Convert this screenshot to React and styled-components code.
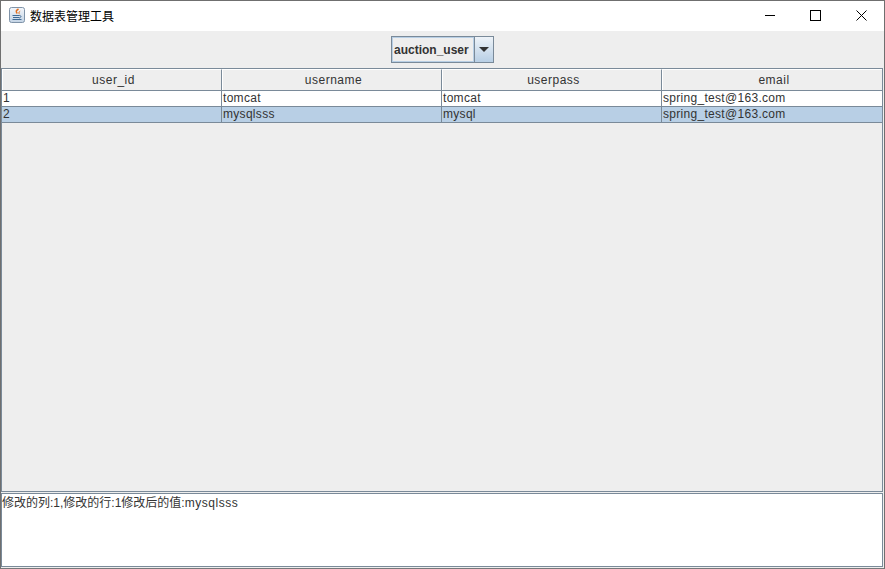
import React from "react";
import styled, { createGlobalStyle } from "styled-components";

const Global = createGlobalStyle`
  html, body { margin: 0; padding: 0; background: #eeeeee; }
  body { font-family: "Liberation Sans", "Noto Sans CJK SC", sans-serif; }
`;

const BORDER = "#7a8a99";
const columns = ["user_id", "username", "userpass", "email"];
const rows = [
  { values: ["1", "tomcat", "tomcat", "spring_test@163.com"] },
  { values: ["2", "mysqlsss", "mysql", "spring_test@163.com"], selected: true },
];

const JavaIcon = () => (
  <svg width="16" height="16" viewBox="0 0 16 16">
    <defs>
      <linearGradient id="plate" x1="0" y1="0" x2="0" y2="1">
        <stop offset="0" stopColor="#f4f7fb" />
        <stop offset="1" stopColor="#c3d3e4" />
      </linearGradient>
    </defs>
    <rect x="0.5" y="0.5" width="15" height="15" rx="2" fill="url(#plate)" stroke="#7f93a8" />
    <path d="M9.5 2c-2.5 1.5-3 2.5-1.2 4.6" fill="none" stroke="#e4701e" strokeWidth="1.5" />
    <path d="M11.2 4.2c-1.6 1-1.6 1.8-.7 3" fill="none" stroke="#e4701e" strokeWidth="1" />
    <path d="M3.5 8.5h7M4 10.5h6M3.5 12.5h9" stroke="#3f6a94" strokeWidth="1" />
    <path d="M10.5 8.5c2 0 2 2-.5 2.5" fill="none" stroke="#3f6a94" strokeWidth="1" />
  </svg>
);

const App = () => (
  <Window>
    <Global />
    <TitleBar>
      <IconSlot>
        <JavaIcon />
      </IconSlot>
      <Title>数据表管理工具</Title>
      <Controls>
        <ControlButton>
          <svg width="11" height="11" viewBox="0 0 11 11">
            <path d="M1 5.5h10" stroke="#000" />
          </svg>
        </ControlButton>
        <ControlButton>
          <svg width="11" height="11" viewBox="0 0 11 11">
            <rect x="0.5" y="0.5" width="10" height="10" fill="none" stroke="#000" />
          </svg>
        </ControlButton>
        <ControlButton>
          <svg width="11" height="11" viewBox="0 0 11 11">
            <path d="M0.5 0.5l10 10M10.5 0.5l-10 10" stroke="#000" />
          </svg>
        </ControlButton>
      </Controls>
    </TitleBar>
    <Toolbar>
      <Combo>
        <ComboValue>auction_user</ComboValue>
        <ComboArrow>
          <svg width="10" height="5" viewBox="0 0 10 5">
            <path d="M0 0h10L5 5z" fill="#333" />
          </svg>
        </ComboArrow>
      </Combo>
    </Toolbar>
    <TablePane>
      <HeaderRow>
        {columns.map((name) => (
          <HeaderCell key={name}>{name}</HeaderCell>
        ))}
      </HeaderRow>
      {rows.map((row) => (
        <Row key={row.values[0]} $selected={row.selected}>
          {row.values.map((value, i) => (
            <Cell key={i}>{value}</Cell>
          ))}
        </Row>
      ))}
    </TablePane>
    <LogPane>
      修改的列:1,修改的行:1修改后的值:<LogValue>mysqlsss</LogValue>
    </LogPane>
  </Window>
);

export default App;

const Window = styled.div`
  box-sizing: border-box;
  width: 885px;
  height: 569px;
  display: flex;
  flex-direction: column;
  padding: 0 1px 1px 0;
  border: 1px solid #6f6f6f;
  border-bottom-color: #77797b;
  background: #eeeeee;
  overflow: hidden;
  color: #333333;
  font-size: 12px;
`;

const TitleBar = styled.div`
  box-sizing: border-box;
  height: 30px;
  flex: none;
  margin-right: -1px;
  display: flex;
  align-items: flex-start;
  background: #ffffff;
`;

const IconSlot = styled.div`
  width: 16px;
  height: 16px;
  margin: 6px 5px 0 8px;
`;

const Title = styled.div`
  flex: 1;
  padding-top: 6px;
  color: #000000;
  font-size: 12px;
`;

const Controls = styled.div`
  display: flex;
  height: 100%;
`;

const ControlButton = styled.div`
  box-sizing: border-box;
  width: 46px;
  height: 100%;
  padding: 9px 0 0 18px;
`;

const Toolbar = styled.div`
  height: 37px;
  flex: none;
  display: flex;
  justify-content: center;
  padding-top: 5px;
  box-sizing: border-box;
`;

const Combo = styled.div`
  box-sizing: border-box;
  width: 103px;
  height: 27px;
  display: flex;
  border: 1px solid ${BORDER};
  background: #eeeeee;
`;

const ComboValue = styled.div`
  flex: 1;
  display: flex;
  align-items: center;
  padding-left: 1.5px;
  border: 1px solid #b8cfe5;
  font-weight: bold;
`;

const ComboArrow = styled.div`
  width: 18px;
  flex: none;
  display: flex;
  align-items: center;
  justify-content: center;
  border-left: 1px solid ${BORDER};
  background: linear-gradient(#eef3f8, #b8cfe5);
`;

const TablePane = styled.div`
  flex: 1;
  border: 1px solid ${BORDER};
  min-height: 0;
`;

const HeaderRow = styled.div`
  display: grid;
  grid-template-columns: repeat(3, 220px) 1fr;
  height: 21px;
  border-bottom: 1px solid ${BORDER};
`;

const HeaderCell = styled.div`
  display: flex;
  align-items: center;
  justify-content: center;
  padding-left: 3px;
  letter-spacing: 0.5px;
  border-right: 1px solid ${BORDER};
  border-top: 1px solid #ffffff;
  border-left: 1px solid #ffffff;
  &:last-child { border-right: none; }
`;

const Row = styled.div`
  display: grid;
  grid-template-columns: repeat(3, 220px) 1fr;
  height: 15px;
  background: ${(p) => (p.$selected ? "#b8cfe5" : "#ffffff")};
  border-bottom: 1px solid ${BORDER};
`;

const Cell = styled.div`
  padding-left: 1px;
  line-height: 15px;
  letter-spacing: 0.3px;
  border-right: 1px solid ${BORDER};
  white-space: nowrap;
  &:last-child { border-right: none; }
`;

const LogPane = styled.div`
  flex: none;
  box-sizing: border-box;
  height: 74px;
  margin-top: 1px;
  border: 1px solid ${BORDER};
  background: #ffffff;
  line-height: 15px;
  padding-top: 2px;
`;

const LogValue = styled.span`
  letter-spacing: 0.55px;
`;
